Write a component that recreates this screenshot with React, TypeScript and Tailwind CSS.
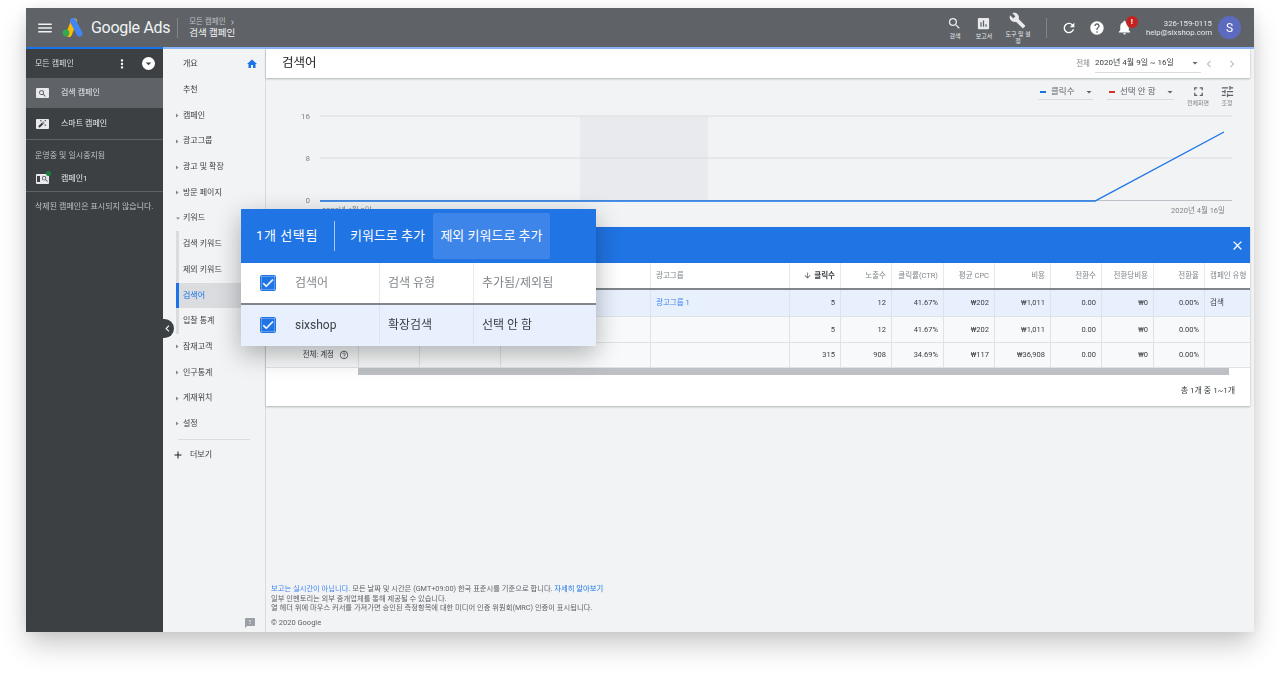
import React from 'react'
import {
  MdMenu, MdSearch, MdAssessment, MdBuild, MdRefresh, MdHelp, MdNotifications, MdHome,
  MdArrowDropDown, MdClose, MdFullscreen, MdTune, MdCheck, MdArrowDownward, MdHelpOutline,
  MdAdd, MdFeedback, MdMoreVert, MdChevronLeft, MdChevronRight, MdAutoFixHigh,
} from 'react-icons/md'

const font = '[font-family:Roboto,"Noto_Sans_CJK_KR",sans-serif]'

const cols = 'grid grid-cols-[93px_61px_81px_150px_139px_51px_51px_52px_51px_56px_51px_52px_51px_45px]'

const headers = ['', '', '', '', '광고그룹', '클릭수', '노출수', '클릭률(CTR)', '평균 CPC', '비용', '전환수', '전환당비용', '전환율', '캠페인 유형']

const rows = [
  { bg: 'bg-[#e8f0fe]', h: 'h-[27px]', cells: ['5', '12', '41.67%', '₩202', '₩1,011', '0.00', '₩0', '0.00%'], group: '광고그룹 1', type: '검색' },
  { bg: 'bg-[#f8f9fa]', h: 'h-[26px]', cells: ['5', '12', '41.67%', '₩202', '₩1,011', '0.00', '₩0', '0.00%'], group: '', type: '' },
  { bg: 'bg-[#f8f9fa]', h: 'h-[25px]', cells: ['315', '908', '34.69%', '₩117', '₩36,908', '0.00', '₩0', '0.00%'], group: '', type: '', total: true },
]

const Caret = ({ down }: { down?: boolean }) => (
  <svg width="5" height="5" viewBox="0 0 5 5" className="mr-[2px] shrink-0 text-[#80868b]">
    <polygon points={down ? '0,1.5 4,1.5 2,3.5' : '0,0.5 2.5,2.5 0,4.5'} fill="currentColor" />
  </svg>
)

const NavItem = ({ label, caret, down, home }: { label: string; caret?: boolean; down?: boolean; home?: boolean }) => (
  <div className="flex h-[25.7px] items-center pl-[13px] pr-[7px] text-[8px] text-[#3c4043]">
    {caret ? <Caret down={down} /> : <span className="w-[7px] shrink-0" />}
    <span>{label}</span>
    {home && <MdHome className="ml-auto text-[12px] text-[#1a73e8]" />}
  </div>
)

const SubItem = ({ label, active }: { label: string; active?: boolean }) => (
  <div
    className={`ml-[13px] flex h-[25.7px] items-center border-l-[3px] pl-[4px] text-[8px] ${
      active ? 'border-[#1a73e8] bg-[#dadce0] text-[#1a73e8]' : 'border-[#dadce0] text-[#3c4043]'
    }`}
  >
    {label}
  </div>
)

const HeadTool = ({ icon, label, w }: { icon: React.ReactNode; label: string; w: string }) => (
  <div className={`flex flex-col items-center text-center text-[6px] leading-[7px] text-[#e8eaed] ${w}`}>
    {icon}
    <span className="mt-[1px]">{label}</span>
  </div>
)

export default function App() {
  return (
    <div className={`h-[676px] w-[1280px] overflow-hidden bg-white pl-[26px] pt-2 ${font}`}>
      <div className="relative flex h-[624px] w-[1228px] flex-col bg-[#f1f3f4] shadow-[0_14px_26px_-2px_rgba(0,0,0,0.22),0_0_14px_rgba(0,0,0,0.07)] blur-[0.5px]">
        {/* top bar */}
        <header className="flex h-[39px] shrink-0 items-center bg-[#5f6368] text-white">
          <MdMenu className="ml-[10px] text-[18px] text-[#f1f3f4]" />
          <svg width="21" height="19" viewBox="0 0 21 19" className="ml-[8px]">
            <path d="M7 16 L12 3" stroke="#fbbc04" strokeWidth="6" strokeLinecap="round" />
            <path d="M11 3 L17.5 15.5" stroke="#4285f4" strokeWidth="6" strokeLinecap="round" />
            <circle cx="4" cy="15" r="3.4" fill="#34a853" />
          </svg>
          <span className="ml-[8px] text-[16px] leading-none tracking-[-0.3px] text-[#f1f3f4]">Google Ads</span>
          <div className="ml-[7px] h-[20px] w-px bg-[#80868b]" />
          <div className="ml-[11px] flex flex-col">
            <span className="flex items-center text-[7.5px] leading-[10px] text-[#bdc1c6]">
              모든 캠페인 <MdChevronRight className="ml-[2px] text-[9px]" />
            </span>
            <span className="text-[9.5px] leading-[11px] text-[#f1f3f4]">검색 캠페인</span>
          </div>

          <div className="ml-auto flex items-center">
            <HeadTool w="w-[22px]" label="검색" icon={<MdSearch className="text-[15px]" />} />
            <HeadTool w="ml-[7px] w-[22px]" label="보고서" icon={<MdAssessment className="text-[15px]" />} />
            <HeadTool w="ml-[9px] w-[28px]" label="도구 및 설정" icon={<MdBuild className="text-[17px]" />} />
            <div className="ml-[14px] h-[20px] w-px bg-[#80868b]" />
            <MdRefresh className="ml-[14px] text-[16px]" />
            <MdHelp className="ml-[12px] text-[16px]" />
            <div className="relative ml-[11px]">
              <MdNotifications className="text-[17px]" />
              <span className="absolute -right-[5px] -top-[3px] flex h-[12px] w-[12px] items-center justify-center rounded-full bg-[#c5221f] text-[8px] font-bold leading-none">
                !
              </span>
            </div>
            <div className="ml-[13px] flex flex-col items-end text-[7.8px] leading-[9px] text-[#e8eaed]">
              <span>326-159-0115</span>
              <span>help@sixshop.com</span>
            </div>
            <div className="ml-[6px] mr-[13px] flex h-[23px] w-[23px] items-center justify-center rounded-full bg-[#5c6bc0] text-[12px]">
              S
            </div>
          </div>
        </header>
        <div className="flex h-[2px] shrink-0">
          <div className="w-[137px] bg-[#1a73e8]" />
          <div className="flex-1 bg-[#8ab4f8]" />
        </div>

        <div className="flex min-h-0 flex-1">
          {/* campaign tree */}
          <aside className="flex w-[137px] shrink-0 flex-col bg-[#3c4043] text-[#e8eaed]">
            <div className="flex h-[29px] items-center pl-[9px] pr-[8px] text-[8px] text-[#dadce0]">
              <span>모든 캠페인</span>
              <MdMoreVert className="ml-auto text-[14px] text-white" />
              <span className="ml-[13px] flex h-[13px] w-[13px] items-center justify-center rounded-full bg-white">
                <MdArrowDropDown className="text-[13px] text-[#3c4043]" />
              </span>
            </div>
            <div className="flex h-[30px] items-center bg-[#5f6368] pl-[10px] text-[8px]">
              <span className="mr-[12px] flex h-[10px] w-[13px] items-center justify-center rounded-[1px] bg-[#e8eaed]">
                <MdSearch className="text-[9px] text-[#3c4043]" />
              </span>
              검색 캠페인
            </div>
            <div className="flex h-[32px] items-center border-b border-[#5f6368] pl-[10px] text-[8px]">
              <span className="mr-[12px] flex h-[10px] w-[13px] items-center justify-center rounded-[1px] bg-[#e8eaed]">
                <MdAutoFixHigh className="text-[9px] text-[#3c4043]" />
              </span>
              스마트 캠페인
            </div>
            <div className="flex h-[52px] flex-col border-b border-[#5f6368] pl-[9px] text-[8px]">
              <span className="mt-[10px] text-[#bdc1c6]">운영중 및 일시중지됨</span>
              <div className="mt-[11px] flex items-center pl-[1px]">
                <span className="relative mr-[12px] flex h-[10px] w-[13px] items-center gap-[1px] rounded-[1px] bg-[#e8eaed] pl-[1px]">
                  <span className="h-[6px] w-[3px] bg-[#3c4043]" />
                  <MdSearch className="text-[8px] text-[#3c4043]" />
                  <span className="absolute -right-[2px] -top-[3px] h-[5px] w-[5px] rounded-full bg-[#188038]" />
                </span>
                캠페인1
              </div>
            </div>
            <div className="pl-[9px] pt-[9px] text-[8px] text-[#bdc1c6]">삭제된 캠페인은 표시되지 않습니다.</div>
          </aside>

          {/* side nav */}
          <nav className="flex w-[103px] shrink-0 flex-col border-r border-[#dadce0] bg-[#f1f3f4] pt-[2.5px]">
            <NavItem label="개요" home />
            <NavItem label="추천" />
            <NavItem label="캠페인" caret />
            <NavItem label="광고그룹" caret />
            <NavItem label="광고 및 확장" caret />
            <NavItem label="방문 페이지" caret />
            <NavItem label="키워드" caret down />
            <SubItem label="검색 키워드" />
            <SubItem label="제외 키워드" />
            <SubItem label="검색어" active />
            <SubItem label="입찰 통계" />
            <NavItem label="잠재고객" caret />
            <NavItem label="인구통계" caret />
            <NavItem label="게재위치" caret />
            <NavItem label="설정" caret />
            <div className="ml-[15px] mr-[15px] mt-[2px] h-px bg-[#dadce0]" />
            <div className="ml-[9px] mt-[9px] flex items-center text-[8px] text-[#3c4043]">
              <MdAdd className="mr-[6px] text-[12px] text-[#202124]" />
              더보기
            </div>
            <MdFeedback className="ml-auto mr-[9px] mt-auto mb-[3px] text-[12px] text-[#9aa0a6]" />
          </nav>

          {/* main */}
          <main className="flex min-w-0 flex-1 flex-col pr-[4px]">
            <div className="flex h-[29px] shrink-0 items-center bg-white pl-[16px] pr-[11px] shadow-[0_1px_2px_rgba(60,64,67,0.35)]">
              <span className="text-[12.5px] text-[#202124]">검색어</span>
              <span className="ml-auto text-[7.5px] text-[#80868b]">전체</span>
              <div className="ml-[5px] flex w-[106px] items-center border-b border-[#dadce0] pb-[3px] pt-[3px] text-[8px] text-[#3c4043]">
                2020년 4월 9일 ~ 16일
                <MdArrowDropDown className="ml-auto text-[12px] text-[#5f6368]" />
              </div>
              <MdChevronLeft className="ml-[1px] text-[14px] text-[#bdc1c6]" />
              <MdChevronRight className="ml-[9px] text-[14px] text-[#bdc1c6]" />
            </div>

            {/* chart */}
            <div className="h-[149px] shrink-0">
              <div className="flex h-[30px] items-start justify-end pr-[11px] pt-[6px] text-[8.5px] text-[#5f6368]">
                <div className="flex h-[16px] w-[55px] items-center border-b border-[#dadce0] pl-[2px]">
                  <span className="mr-[5px] h-[2px] w-[6px] bg-[#1a73e8]" />
                  클릭수
                  <MdArrowDropDown className="ml-auto mr-[-2px] text-[12px] text-[#5f6368]" />
                </div>
                <div className="ml-[14px] flex h-[16px] w-[67px] items-center border-b border-[#dadce0] pl-[2px]">
                  <span className="mr-[5px] h-[2px] w-[6px] bg-[#d93025]" />
                  선택 안 함
                  <MdArrowDropDown className="ml-auto mr-[-2px] text-[12px] text-[#5f6368]" />
                </div>
                <div className="ml-[12px] flex w-[24px] flex-col items-center text-[6px] leading-[7px] text-[#80868b]">
                  <MdFullscreen className="text-[15px] text-[#5f6368]" />
                  전체화면
                </div>
                <div className="ml-[5px] flex w-[24px] flex-col items-center text-[6px] leading-[7px] text-[#80868b]">
                  <MdTune className="text-[15px] text-[#5f6368]" />
                  조정
                </div>
              </div>
              <svg width="984" height="119" viewBox="0 0 984 119" className="block">
                <rect x="314" y="8" width="128" height="84" fill="#e8eaed" />
                <line x1="54" y1="8" x2="966" y2="8" stroke="#dadce0" />
                <line x1="54" y1="50" x2="966" y2="50" stroke="#dadce0" />
                <line x1="54" y1="92.5" x2="966" y2="92.5" stroke="#bdc1c6" />
                <text x="44" y="11" textAnchor="end" fontSize="8" fill="#80868b">16</text>
                <text x="44" y="53" textAnchor="end" fontSize="8" fill="#80868b">8</text>
                <text x="44" y="95" textAnchor="end" fontSize="8" fill="#80868b">0</text>
                <polyline points="54,93 829,93 958,24" fill="none" stroke="#1a73e8" strokeWidth="1.4" />
                <text x="56" y="105" fontSize="7.5" fill="#80868b">2020년 4월 9일</text>
                <text x="959" y="105" textAnchor="end" fontSize="7.5" fill="#80868b">2020년 4월 16일</text>
              </svg>
            </div>

            {/* table */}
            <div className="shrink-0 shadow-[0_1px_2px_rgba(60,64,67,0.35)]">
              <div className="flex h-[36px] items-center justify-end bg-[#2074e4] pr-[5px]">
                <MdClose className="text-[15px] text-white" />
              </div>
              <div className={`${cols} h-[27px] border-b-2 border-[#80868b] bg-white text-[7.5px] text-[#80868b]`}>
                {headers.map((h, i) => (
                  <div
                    key={i}
                    className={`flex items-center whitespace-nowrap border-r border-[#e8eaed] px-[5px] last:border-r-0 ${
                      i === 4 || i === 13 ? 'justify-start' : 'justify-end'
                    } ${i === 5 ? 'font-bold text-[#3c4043]' : ''}`}
                  >
                    {i === 5 && <MdArrowDownward className="mr-[2px] text-[9px] font-normal text-[#5f6368]" />}
                    {h}
                  </div>
                ))}
              </div>
              {rows.map((r, idx) => (
                <div key={idx} className={`${cols} ${r.h} border-b border-[#e0e3e6] text-[7.5px] text-[#3c4043] ${r.bg}`}>
                  <div className="flex items-center justify-end border-r border-[#e0e3e6] pr-[9px]">
                    {r.total && (
                      <>
                        전체: 계정 <MdHelpOutline className="ml-[5px] text-[10px] text-[#5f6368]" />
                      </>
                    )}
                  </div>
                  <div className="border-r border-[#e0e3e6]" />
                  <div className="border-r border-[#e0e3e6]" />
                  <div className="border-r border-[#e0e3e6]" />
                  <div className="flex items-center border-r border-[#e0e3e6] px-[5px] text-[#4285f4]">{r.group}</div>
                  {r.cells.map((c, i) => (
                    <div key={i} className="flex items-center justify-end border-r border-[#e0e3e6] px-[5px]">
                      {c}
                    </div>
                  ))}
                  <div className="flex items-center px-[5px]">{r.type}</div>
                </div>
              ))}
              <div className="bg-white pl-[92px] pr-[21px]">
                <div className="h-[7px] bg-[#bdc1c6]" />
              </div>
              <div className="flex h-[31px] items-center justify-end bg-white pr-[15px] text-[8px] text-[#3c4043]">
                총 1개 중 1~1개
              </div>
            </div>

            <div className="mt-auto pb-[5px] pl-[5px] text-[7.3px] leading-[9.5px] text-[#5f6368]">
              <p>
                <span className="text-[#4285f4]">보고는 실시간이 아닙니다.</span> 모든 날짜 및 시간은 (GMT+09:00) 한국 표준시를 기준으로 합니다.{' '}
                <span className="text-[#1a73e8]">자세히 알아보기</span>
              </p>
              <p>일부 인벤토리는 외부 중개업체를 통해 제공될 수 있습니다.</p>
              <p>열 헤더 위에 마우스 커서를 가져가면 승인된 측정항목에 대한 미디어 인증 위원회(MRC) 인증이 표시됩니다.</p>
              <p className="mt-[5px] text-[7.5px]">© 2020 Google</p>
            </div>
          </main>
        </div>

        {/* collapse handle */}
        <div className="absolute left-[134px] top-[311px] flex h-[19px] w-[14px] items-center justify-end rounded-r-full bg-[#3c4043]">
          <MdChevronLeft className="text-[13px] text-white" />
        </div>

        {/* selection popup */}
        <div className="absolute left-[215px] top-[201px] w-[355px] bg-white shadow-[0_8px_24px_rgba(0,0,0,0.3)]">
          <div className="flex h-[54px] items-center bg-[#2074e4] pl-[15px] text-[13px] text-white">
            <span className="tracking-[0.6px]">1개 선택됨</span>
            <div className="ml-[16px] h-[30px] w-px bg-[#a8c7fa]" />
            <span className="ml-[15px]">키워드로 추가</span>
            <span className="ml-[8px] flex h-[46px] w-[117px] items-center justify-center rounded-[2px] bg-[#3d85e9]">
              제외 키워드로 추가
            </span>
          </div>
          <div className="grid h-[42px] grid-cols-[139px_94px_122px] border-b-2 border-[#80868b] text-[12px] text-[#80868b]">
            <div className="flex items-center border-r border-[#e8eaed] pl-[19px]">
              <span className="flex h-[16px] w-[16px] items-center justify-center rounded-[2px] bg-[#2074e4]">
                <MdCheck className="stroke-[1px] text-[14px] text-white" />
              </span>
              <span className="ml-[19px]">검색어</span>
            </div>
            <div className="flex items-center border-r border-[#e8eaed] pl-[8px]">검색 유형</div>
            <div className="flex items-center pl-[8px]">추가됨/제외됨</div>
          </div>
          <div className="grid h-[41px] grid-cols-[139px_94px_122px] bg-[#e8f0fe] pb-[2px] text-[12px] text-[#3c4043]">
            <div className="flex items-center border-r border-[#dde3ec] pl-[19px]">
              <span className="flex h-[16px] w-[16px] items-center justify-center rounded-[2px] bg-[#2074e4]">
                <MdCheck className="stroke-[1px] text-[14px] text-white" />
              </span>
              <span className="ml-[19px]">sixshop</span>
            </div>
            <div className="flex items-center border-r border-[#dde3ec] pl-[8px]">확장검색</div>
            <div className="flex items-center pl-[8px]">선택 안 함</div>
          </div>
        </div>
      </div>
    </div>
  )
}
